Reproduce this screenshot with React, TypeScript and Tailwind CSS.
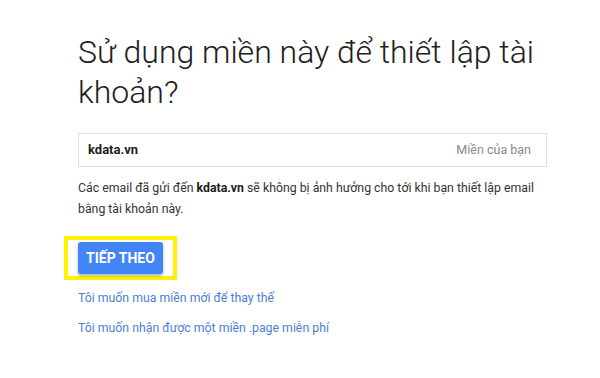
export default function App() {
  return (
    <div className="min-h-[378px] w-[600px] bg-white font-['Roboto','Liberation_Sans',sans-serif]">
      <div className="pl-[78px] pr-[53px] pt-[32px]">
        {/* Heading */}
        <h1 className="text-[32px] font-light leading-[40px] text-[#212121]">
          Sử dụng miền này để thiết lập tài khoản?
        </h1>

        {/* Domain field */}
        <div className="mt-[21px] flex h-[34px] items-center justify-between border border-[#e0e0e0] px-[9px]">
          <span className="text-[13px] font-bold text-[#212121]">kdata.vn</span>
          <span className="pr-[6px] text-[12.5px] text-[#8a8a8a]">Miền của bạn</span>
        </div>

        <p className="mt-[11px] text-[12.3px] leading-[21px] text-[#333]">
          Các email đã gửi đến <span className="font-bold text-[#212121]">kdata.vn</span> sẽ không bị ảnh hưởng cho tới khi bạn thiết lập email bằng tài khoản này.
        </p>

        {/* Next button, highlighted */}
        <div className="-ml-[14px] mt-[16px] inline-flex border-[4px] border-[#fff200] px-[10px] py-[2px]">
          <button className="h-[32px] rounded-[3px] bg-[#4285f4] px-[8px] text-[14px] font-bold uppercase text-white shadow-[0_2px_3px_rgba(0,0,0,0.3)]">
            Tiếp theo
          </button>
        </div>

        <div className="mt-[9px] flex flex-col gap-[12px] text-[12.3px] leading-[18px] text-[#4a7fd8]">
          <a href="#">Tôi muốn mua miền mới để thay thế</a>
          <a href="#">Tôi muốn nhận được một miền .page miễn phí</a>
        </div>
      </div>
    </div>
  );
}
